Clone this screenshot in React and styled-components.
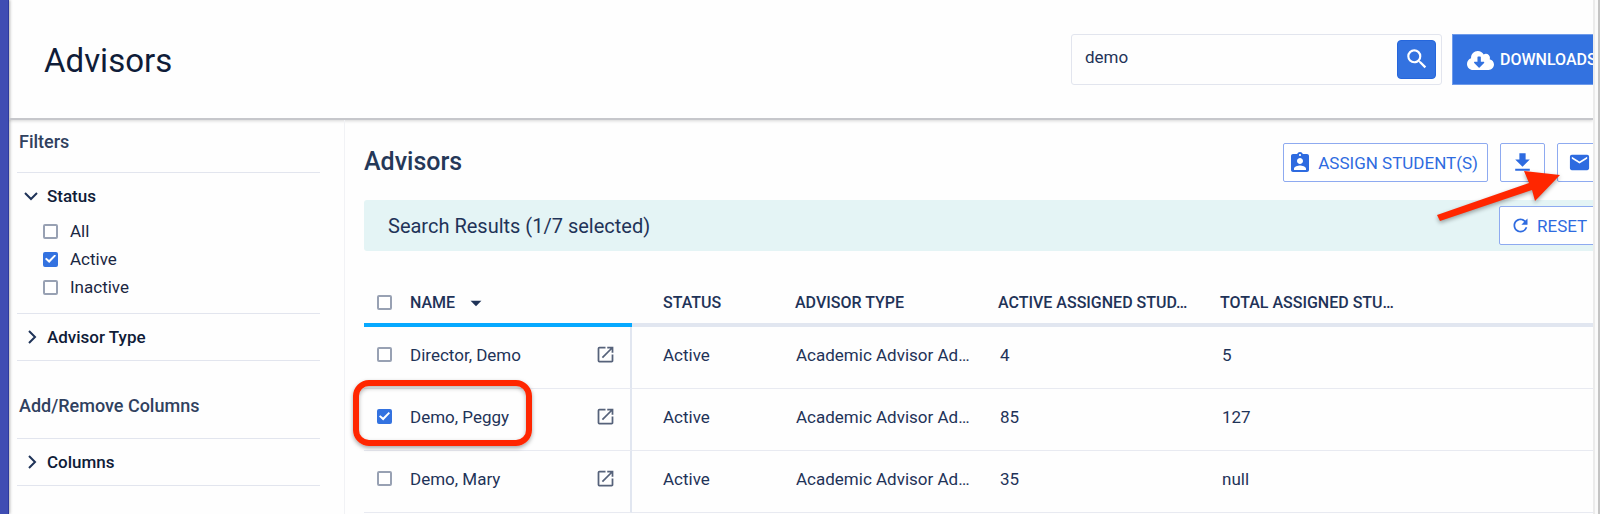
import React, { useState } from 'react';
import styled, { createGlobalStyle, css } from 'styled-components';
import {
  MdArrowDropDown,
  MdAssignmentInd,
  MdEmail,
  MdFileDownload,
  MdOpenInNew,
  MdRefresh,
  MdSearch,
} from 'react-icons/md';
import { FaCloudDownloadAlt } from 'react-icons/fa';

const GlobalStyle = createGlobalStyle`
  * {
    box-sizing: border-box;
  }

  body {
    margin: 0;
    overflow: hidden;
    background: #fefefe;
    color: #1f3358;
    font-family: Roboto, 'Liberation Sans', sans-serif;
    font-size: 17px;
    line-height: 20px;
  }

  button, input {
    font: inherit;
  }
`;

const Shell = styled.div`
  display: flex;
  min-height: 100vh;
`;

const Rail = styled.div`
  flex: 0 0 9px;
  background: #3f4db3;
  border-right: 1px solid #2d3a9c;
  box-shadow: 1px 0 3px rgba(0, 0, 0, 0.3);
`;

const Page = styled.div`
  flex: 1;
  min-width: 0;
  display: flex;
  flex-direction: column;
  overflow: hidden;
`;

const Scrollbar = styled.div`
  flex: 0 0 7px;
  background: #fafafa;
  border-left: 2px solid #ebebeb;
  border-right: 2px solid #c4c4c4;
`;

const Header = styled.header`
  display: flex;
  align-items: center;
  height: 120px;
  padding-left: 35px;
  border-bottom: 2px solid #c6c7cb;
  box-shadow: 0 1px 3px rgba(0, 0, 0, 0.16);
`;

const Title = styled.h1`
  flex: 1;
  margin: 0;
  padding-top: 4px;
  color: #0f1c38;
  font-size: 33px;
  font-weight: 400;
  line-height: 40px;
`;

const SearchBox = styled.form`
  display: flex;
  align-items: center;
  width: 371px;
  height: 51px;
  margin-right: 10px;
  padding-right: 5px;
  border: 1px solid #e2e5ee;
  border-radius: 3px;
`;

const SearchInput = styled.input`
  flex: 1;
  min-width: 0;
  padding: 0 13px 4px;
  border: 0;
  outline: 0;
  background: none;
  color: #1f3358;
`;

const SearchButton = styled.button`
  display: flex;
  align-items: center;
  justify-content: center;
  width: 39px;
  height: 39px;
  padding: 0;
  border: 1px solid #2566dc;
  border-radius: 4px;
  background: #3372e0;
  color: #fff;
`;

const Button = styled.button`
  flex: none;
  display: flex;
  align-items: center;
  gap: 6px;
  height: 39px;
  padding: 0 9px 0 4px;
  border: 1px solid #8eaaf0;
  border-radius: 2px;
  background: #fff;
  color: #2e6be0;
  white-space: nowrap;

  ${({ $primary }) =>
    $primary &&
    css`
      height: 51px;
      padding: 2px 12px 0 14px;
      border-color: #6f9bea;
      border-radius: 0;
      background: #3372e0;
      color: #fff;
      font-size: 16px;
      font-weight: 500;
    `}

  ${({ $square }) =>
    $square &&
    css`
      justify-content: center;
      width: 45px;
      padding: 0;
    `}

  ${({ $wide }) =>
    $wide &&
    css`
      padding: 0 12px 0 10px;
    `}
`;

/* The right edge of the page cuts through the last buttons. */
const Clip = styled.div`
  flex: 0 0 ${({ $width }) => $width}px;
  overflow: hidden;
`;

const Body = styled.div`
  flex: 1;
  display: flex;
`;

const Sidebar = styled.aside`
  flex: 0 0 336px;
  padding: 12px 24px 0 8px;
  border-right: 1px solid #f1f2f5;
`;

const SideTitle = styled.h2`
  margin: 0;
  padding: 0 2px ${({ $gap }) => $gap}px;
  border-bottom: 1px solid #e2e5ee;
  color: #30415f;
  font-size: 18px;
  font-weight: 500;
  line-height: 20px;
`;

const Group = styled.section`
  padding: 12px 0;
  border-bottom: 1px solid #e2e5ee;

  & + h2 {
    margin-top: 35px;
  }
`;

const GroupToggle = styled.button`
  display: flex;
  align-items: center;
  gap: 8px;
  height: 22px;
  padding: 0 6px;
  border: 0;
  background: none;
  color: #0f1c38;
  font-weight: 500;
`;

const Options = styled.div`
  padding: 10px 0 0 26px;
`;

const Option = styled.label`
  display: flex;
  align-items: center;
  gap: 12px;
  height: 28px;
  color: #1a2742;
`;

const Check = styled.input.attrs({ type: 'checkbox' })`
  appearance: none;
  flex: none;
  display: grid;
  place-content: center;
  width: 15px;
  height: 15px;
  margin: 0;
  border: 2px solid #98a1b3;
  border-radius: 2px;
  background: #fff;

  &:checked {
    border-color: #3372e0;
    background: #3372e0;
  }

  &:checked::before {
    content: '';
    width: 11px;
    height: 9px;
    background: #fff;
    clip-path: polygon(0 50%, 12% 35%, 37% 62%, 88% 0, 100% 14%, 38% 94%);
  }
`;

const Main = styled.main`
  flex: 1;
  min-width: 0;
  padding: 23px 0 0 19px;
`;

const Toolbar = styled.div`
  display: flex;
  align-items: center;
  gap: 12px;
  height: 39px;
`;

const Heading = styled.h2`
  flex: 1;
  margin: 0;
  padding-bottom: 2px;
  color: #253858;
  font-size: 25px;
  font-weight: 500;
`;

const Banner = styled.div`
  display: flex;
  align-items: center;
  justify-content: space-between;
  height: 51px;
  margin: 18px 0 29px;
  padding-left: 24px;
  border-radius: 3px 0 0 3px;
  background: #e4f4f5;
  font-size: 20px;

  button {
    font-size: 17px;
  }
`;

const Table = styled.table`
  width: 100%;
  border-collapse: separate;
  border-spacing: 0;
  table-layout: fixed;
`;

const Th = styled.th`
  height: 47px;
  padding: 2px 16px 0 0;
  border-bottom: 4px solid ${({ $sorted }) => ($sorted ? '#06a9ff' : '#e1e6f0')};
  font-size: 16px;
  font-weight: 500;
  text-align: left;
  white-space: nowrap;

  &:nth-child(2) {
    padding-left: 31px;
  }
`;

const Td = styled.td`
  height: 62px;
  padding: 0 16px 6px 1px;
  border-bottom: 1px solid #e8eaf1;
  white-space: nowrap;

  &:first-child {
    padding: 0 14px 6px 0;
    border-right: 2px solid #e1e6f0;
  }

  &:nth-child(2) {
    padding-left: 31px;
  }

  &:nth-child(n + 4) {
    padding-left: 2px;
  }
`;

const NameCell = styled.div`
  display: flex;
  align-items: center;
  padding-left: 13px;

  label {
    display: flex;
    align-items: center;
    gap: 18px;
    flex: ${({ $head }) => ($head ? 'none' : 1)};
  }

  a {
    display: flex;
    color: #56627a;
  }
`;

const SortArrow = styled(MdArrowDropDown)`
  margin-left: 8px;
`;

const Highlight = styled.div`
  position: absolute;
  left: 353px;
  top: 380px;
  width: 179px;
  height: 66px;
  border: 6px solid #ff2600;
  border-radius: 16px;
  box-shadow: 0 2px 4px rgba(0, 0, 0, 0.35), inset 0 2px 4px rgba(0, 0, 0, 0.3);
  pointer-events: none;
`;

const Arrow = styled.svg`
  position: absolute;
  right: 36px;
  top: 164px;
  filter: drop-shadow(0 2px 2px rgba(0, 0, 0, 0.35));
  pointer-events: none;
`;

const columns = ['STATUS', 'ADVISOR TYPE', 'ACTIVE ASSIGNED STUD…', 'TOTAL ASSIGNED STU…'];

const advisors = [
  { name: 'Director, Demo', type: 'Academic Advisor Ad…', active: '4', total: '5' },
  { name: 'Demo, Peggy', type: 'Academic Advisor Ad…', active: '85', total: '127' },
  { name: 'Demo, Mary', type: 'Academic Advisor Ad…', active: '35', total: 'null' },
];

function Chevron({ open }) {
  return (
    <svg width="16" height="16" viewBox="0 0 16 16" fill="none" stroke="#1f3358" strokeWidth="2">
      <path d={open ? 'M2 5l6 6 6-6' : 'M6 2l6 6-6 6'} />
    </svg>
  );
}

export default function App() {
  const [query, setQuery] = useState('demo');
  const [status, setStatus] = useState('Active');
  const [selected, setSelected] = useState(['Demo, Peggy']);

  const toggle = (name) =>
    setSelected((list) =>
      list.includes(name) ? list.filter((n) => n !== name) : [...list, name]
    );

  return (
    <Shell>
      <GlobalStyle />
      <Rail />
      <Page>
        <Header>
          <Title>Advisors</Title>
          <SearchBox onSubmit={(e) => e.preventDefault()}>
            <SearchInput
              aria-label="Search"
              value={query}
              onChange={(e) => setQuery(e.target.value)}
            />
            <SearchButton aria-label="Search">
              <MdSearch size={26} />
            </SearchButton>
          </SearchBox>
          <Clip $width={141}>
            <Button $primary>
              <FaCloudDownloadAlt size={27} />
              DOWNLOADS
            </Button>
          </Clip>
        </Header>
        <Body>
          <Sidebar>
            <SideTitle $gap={20}>Filters</SideTitle>
            <Group>
              <GroupToggle aria-expanded="true">
                <Chevron open />
                Status
              </GroupToggle>
              <Options>
                {['All', 'Active', 'Inactive'].map((name) => (
                  <Option key={name}>
                    <Check checked={status === name} onChange={() => setStatus(name)} />
                    {name}
                  </Option>
                ))}
              </Options>
            </Group>
            <Group>
              <GroupToggle aria-expanded="false">
                <Chevron />
                Advisor Type
              </GroupToggle>
            </Group>
            <SideTitle $gap={22}>Add/Remove Columns</SideTitle>
            <Group>
              <GroupToggle aria-expanded="false">
                <Chevron />
                Columns
              </GroupToggle>
            </Group>
          </Sidebar>
          <Main>
            <Toolbar>
              <Heading>Advisors</Heading>
              <Button>
                <MdAssignmentInd size={24} />
                ASSIGN STUDENT(S)
              </Button>
              <Button $square aria-label="Download">
                <MdFileDownload size={25} />
              </Button>
              <Clip $width={36}>
                <Button $square aria-label="Email">
                  <MdEmail size={23} />
                </Button>
              </Clip>
            </Toolbar>
            <Banner>
              Search Results ({selected.length}/7 selected)
              <Clip $width={94}>
                <Button $wide>
                  <MdRefresh size={21} />
                  RESET
                </Button>
              </Clip>
            </Banner>
            <Table>
              <colgroup>
                <col style={{ width: 268 }} />
                <col style={{ width: 163 }} />
                <col style={{ width: 203 }} />
                <col style={{ width: 222 }} />
                <col style={{ width: 190 }} />
                <col />
              </colgroup>
              <thead>
                <tr>
                  <Th $sorted>
                    <NameCell $head>
                      <label>
                        <Check
                          checked={selected.length === advisors.length}
                          onChange={(e) =>
                            setSelected(e.target.checked ? advisors.map((a) => a.name) : [])
                          }
                        />
                        NAME
                      </label>
                      <SortArrow size={26} />
                    </NameCell>
                  </Th>
                  {columns.map((column) => (
                    <Th key={column}>{column}</Th>
                  ))}
                  <Th />
                </tr>
              </thead>
              <tbody>
                {advisors.map(({ name, type, active, total }) => (
                  <tr key={name}>
                    <Td>
                      <NameCell>
                        <label>
                          <Check
                            checked={selected.includes(name)}
                            onChange={() => toggle(name)}
                          />
                          {name}
                        </label>
                        <a href="#open" aria-label={`Open ${name}`}>
                          <MdOpenInNew size={21} />
                        </a>
                      </NameCell>
                    </Td>
                    <Td>Active</Td>
                    <Td>{type}</Td>
                    <Td>{active}</Td>
                    <Td>{total}</Td>
                    <Td />
                  </tr>
                ))}
              </tbody>
            </Table>
          </Main>
        </Body>
      </Page>
      <Scrollbar />
      <Highlight />
      <Arrow width="130" height="60" viewBox="0 0 130 60">
        <path d="M3 51L95 19L90 7L126 11L101 37L98 26L6 57Z" fill="#ff2600" />
      </Arrow>
    </Shell>
  );
}
